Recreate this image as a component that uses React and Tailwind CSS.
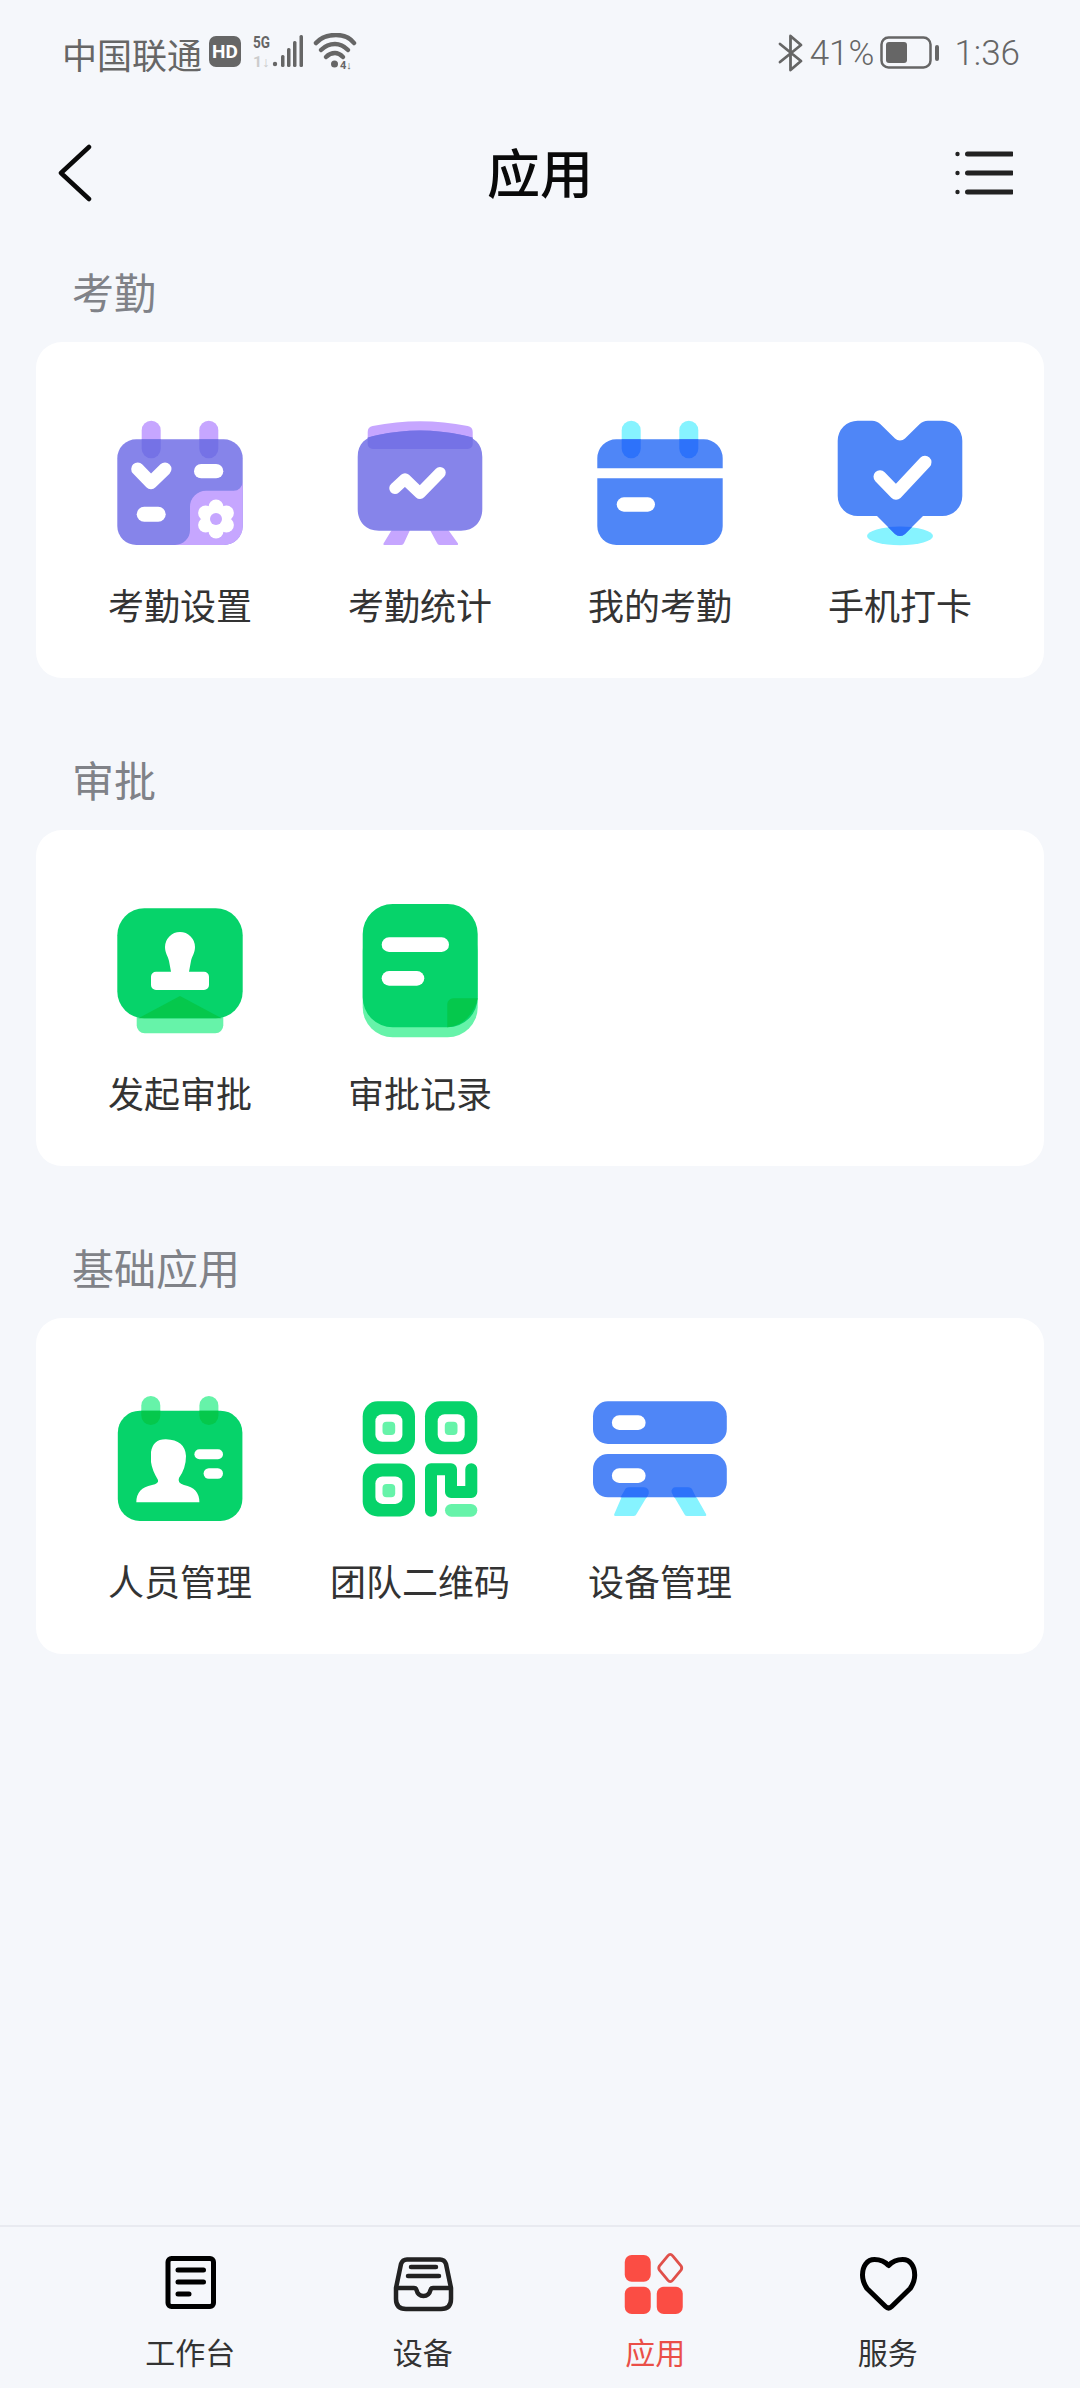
const P = { body: "#8684ea", light: "#c6a6ff", dark: "#7572e6" };
const B = { body: "#4f86f7", light: "#86f3ff", dark: "#2d72fa" };
const G = { body: "#06d36a", light: "#66f3a9", dark: "#05c84c" };

const Svg = ({ children }) => (
  <svg width="144" height="144" viewBox="0 0 144 144" fill="none">{children}</svg>
);

const Tabs = ({ c, top = 8.7, bottom = 46.3, x1 = 33.7, x2 = 91.3, w = 19 }) => (
  <>
    <rect x={x1} y={top} width={w} height={bottom - top} rx={w / 2} fill={c.light} />
    <rect x={x2} y={top} width={w} height={bottom - top} rx={w / 2} fill={c.light} />
  </>
);
const TabsOver = ({ c, bottom = 46.3, bodyTop = 27.3, x1 = 33.7, x2 = 91.3, w = 19 }) => (
  <>
    {[x1, x2].map((x) => (
      <path key={x} d={`M${x} ${bodyTop}H${x + w}V${bottom - w / 2}a${w / 2} ${w / 2} 0 0 1 -${w} 0Z`} fill={c.dark} />
    ))}
  </>
);

const IconSetting = () => (
  <Svg>
    <Tabs c={P} />
    <rect x="9.3" y="27.3" width="125.4" height="105.7" rx="19" fill={P.body} />
    <TabsOver c={P} />
    <path d="M134.7 70a9 9 0 0 1 -9 8.7H98a16 16 0 0 0 -16 16V118a15 15 0 0 1 -15 15H116a18.7 18.7 0 0 0 18.7 -18.7Z" fill={P.light} />
    <path d="M29.7 57L43 70.7L57 57" stroke="#fff" strokeWidth="13" strokeLinecap="round" strokeLinejoin="round" />
    <rect x="86" y="52" width="29.3" height="14.3" rx="7.15" fill="#fff" />
    <rect x="28.7" y="94.7" width="29" height="15" rx="7.5" fill="#fff" />
    <circle cx="108" cy="107" r="12.5" fill="#fff" />
    {[30, 90, 150, 210, 270, 330].map((a) => (
      <circle key={a} cx={108 + 12 * Math.cos((a * Math.PI) / 180)} cy={107 + 12 * Math.sin((a * Math.PI) / 180)} r="7.5" fill="#fff" />
    ))}
    <circle cx="108" cy="107" r="6" fill={P.light} />
  </Svg>
);

const IconStats = () => (
  <Svg>
    <path d="M19.7 20a6 6 0 0 1 5 -6Q72 4.5 119.7 14a6 6 0 0 1 5 6V32a5 5 0 0 1 -5 5H24.7a5 5 0 0 1 -5 -5Z" fill={P.light} />
    <path d="M43.7 118L62 118L56 131a3 3 0 0 1 -3 2H36.3Q35 133 35.5 131.5Z M82 118L100.3 118L110 131.5Q110.5 133 109 133H92a3 3 0 0 1 -3 -2Z" fill={P.light} />
    <path d="M9.7 45C9.7 31 18 25 30 23Q72 14 114 23C126 25 134.3 31 134.3 45V97C134.3 110 126 118.7 113 118.7H31C18 118.7 9.7 110 9.7 97Z" fill={P.body} />
    <path d="M19.7 25.5Q24 24 30 23Q72 14 114 23Q120 24 124.7 25.5V32a5 5 0 0 1 -5 5H24.7a5 5 0 0 1 -5 -5Z" fill={P.dark} />
    <path d="M47 76.3L57 67L72 81.3L92 60.7" stroke="#fff" strokeWidth="11.5" strokeLinecap="round" strokeLinejoin="round" />
  </Svg>
);

const IconMine = () => (
  <Svg>
    <Tabs c={B} />
    <path d="M9.3 56.3V46.3a19 19 0 0 1 19 -19H115.7a19 19 0 0 1 19 19V56.3Z" fill={B.body} />
    <path d="M9.3 66.3H134.7V114a19 19 0 0 1 -19 19H28.3a19 19 0 0 1 -19 -19Z" fill={B.body} />
    <TabsOver c={B} />
    <rect x="28.7" y="85.3" width="38.3" height="14.4" rx="7.2" fill="#fff" />
  </Svg>
);

const IconClock = () => (
  <Svg>
    <ellipse cx="72" cy="124" rx="33" ry="9.3" fill={B.light} />
    <path d="M9.7 28.7a20 20 0 0 1 20 -20H44a12 12 0 0 1 8.5 3.5L67 26.5a7 7 0 0 0 10 0L91.5 12.2A12 12 0 0 1 100 8.7H114.3a20 20 0 0 1 20 20V84a20 20 0 0 1 -20 20H95L77 122a7 7 0 0 1 -10 0L49 104H29.7a20 20 0 0 1 -20 -20Z" fill={B.body} />
    <path d="M60 115Q72 114 84 115L77 122a7 7 0 0 1 -10 0Z" fill={B.dark} />
    <path d="M52 64.7L68 81.3L97 50.3" stroke="#fff" strokeWidth="13" strokeLinecap="round" strokeLinejoin="round" />
  </Svg>
);

const IconStart = () => (
  <Svg>
    <rect x="28.7" y="100" width="86.6" height="32.3" rx="8" fill={G.light} />
    <rect x="9.3" y="7.3" width="125.4" height="110" rx="27" fill={G.body} />
    <path d="M30.3 117.3L72 95L113.7 117.3Q111 117.3 107.7 117.3H36.3Z" fill={G.dark} />
    <path d="M72 31a15 15 0 0 1 15 15c0 6 -3 9 -4 14l-2 10.7H96a5 5 0 0 1 5 5V84a5 5 0 0 1 -5 5H48a5 5 0 0 1 -5 -5V75.7a5 5 0 0 1 5 -5H63L61 60C60 55 57 52 57 46a15 15 0 0 1 15 -15Z" fill="#fff" />
  </Svg>
);

const IconRecord = () => (
  <Svg>
    <rect x="14.7" y="20" width="115" height="116.3" rx="30" fill={G.light} />
    <path d="M44.7 3H99.7a30 30 0 0 1 30 30V96.3a30 30 0 0 1 -30 30H44.7a30 30 0 0 1 -30 -30V33a30 30 0 0 1 30 -30Z" fill={G.body} />
    <path d="M99.3 103a6 6 0 0 1 6 -5.7H129.7C126 113 115 125 99.3 126.3Z" fill={G.dark} />
    <rect x="33.7" y="36.3" width="67.3" height="14.7" rx="7.35" fill="#fff" />
    <rect x="33.7" y="70" width="42.6" height="14.7" rx="7.35" fill="#fff" />
  </Svg>
);

const IconPeople = () => (
  <Svg>
    <Tabs c={G} top={6} bottom={35} x1={33.3} x2={91.4} />
    <rect x="9.8" y="20.7" width="124.6" height="110.3" rx="22" fill={G.body} />
    <TabsOver c={G} bottom={35} bodyTop={20.7} x1={33.3} x2={91.4} />
    <path d="M28.3 112.3Q28.3 98 44 95Q51 93.5 50 90Q44 80 43 72V62Q45 49 58 49.3Q77 50 78 66Q78 78 71 88Q69 93 76 95Q91.4 98 91.4 112.3Z" fill="#fff" />
    <rect x="86.4" y="59.3" width="28.6" height="10" rx="5" fill="#fff" />
    <rect x="95.6" y="78.3" width="19.4" height="10.4" rx="5.2" fill="#fff" />
  </Svg>
);

const QrSquare = ({ x, y }) => (
  <>
    <rect x={x} y={y} width="52.3" height="53" rx="15" fill={G.body} />
    <rect x={x + 12.7} y={y + 13} width="27" height="27.4" rx="7" fill="#fff" />
    <rect x={x + 19.8} y={y + 20.4} width="12.7" height="13.3" rx="4" fill={G.light} />
  </>
);

const IconQr = () => (
  <Svg>
    <QrSquare x={14.7} y={11.3} />
    <QrSquare x={77} y={11.3} />
    <QrSquare x={14.7} y={73.5} />
    <path d="M83 120.7V79.3H103V102H123.3V79.3" stroke={G.body} strokeWidth="12" strokeLinecap="round" strokeLinejoin="round" />
    <rect x="97" y="114" width="32.3" height="12.7" rx="6.35" fill={G.light} />
  </Svg>
);

const IconDevice = () => (
  <Svg>
    <path d="M41 97.3H56a5 5 0 0 1 4.7 6.5L48.5 124a3 3 0 0 1 -3 2H28Q25.5 126 26.3 124L36.5 100.5A5 5 0 0 1 41 97.3Z" fill={B.light} />
    <path d="M88 97.3H100a5 5 0 0 1 4.7 3.2L118 124Q119 126 116.5 126H99a3 3 0 0 1 -2.7 -2L83.7 102.5A4 4 0 0 1 88 97.3Z" fill={B.light} />
    <rect x="5" y="11.3" width="133.8" height="42.7" rx="15" fill={B.body} />
    <rect x="5" y="64" width="133.8" height="43.3" rx="15" fill={B.body} />
    <path d="M41 97.3H56a5 5 0 0 1 4.7 6.5L59 107.3H32.5L36.5 100.5A5 5 0 0 1 41 97.3Z" fill={B.dark} />
    <path d="M88 97.3H100a5 5 0 0 1 4.7 3.2L108 107.3H86L83.7 102.5A4 4 0 0 1 88 97.3Z" fill={B.dark} />
    <rect x="23.9" y="25.3" width="33.7" height="14.7" rx="7.35" fill="#fff" />
    <rect x="23.9" y="78.3" width="33.7" height="14.7" rx="7.35" fill="#fff" />
  </Svg>
);

const sections = [
  { title: "考勤", items: [["考勤设置", IconSetting], ["考勤统计", IconStats], ["我的考勤", IconMine], ["手机打卡", IconClock]], mt: "mt-[24px]", iconPad: "pt-0" },
  { title: "审批", items: [["发起审批", IconStart], ["审批记录", IconRecord]], mt: "mt-[74px]", iconPad: "pt-px" },
  { title: "基础应用", items: [["人员管理", IconPeople], ["团队二维码", IconQr], ["设备管理", IconDevice]], mt: "mt-[74px]", iconPad: "pt-0.5" },
];

const StatusBar = () => (
  <div className="h-[106px] flex items-center justify-between pl-[62px] pr-[60px] text-[#666]">
    <div className="flex items-center">
      <span className="text-[35px] leading-none">中国联通</span>
      <svg className="ml-[7px]" width="150" height="40" viewBox="0 0 150 40" fill="none">
        <rect x="0" y="3" width="32" height="31" rx="7" fill="#666" />
        <text x="16" y="25" textAnchor="middle" fontSize="19" fontWeight="700" fill="#fff" fontFamily="Roboto, sans-serif">HD</text>
        <text x="44" y="15" fontSize="16" fontWeight="700" fill="#666" fontFamily="Roboto, sans-serif" textLength="17" lengthAdjust="spacingAndGlyphs">5G</text>
        <text x="44" y="34" fontSize="14" fontWeight="700" fill="#ccc" fontFamily="Roboto, sans-serif" textLength="17" lengthAdjust="spacingAndGlyphs">1↓</text>
        <circle cx="66" cy="31" r="2.2" fill="#666" />
        <rect x="72" y="22" width="3.5" height="12" rx="1.5" fill="#666" />
        <rect x="78" y="15" width="3.5" height="19" rx="1.5" fill="#666" />
        <rect x="84" y="8" width="3.5" height="26" rx="1.5" fill="#666" />
        <rect x="90.5" y="2" width="3.5" height="32" rx="1.5" fill="#666" />
        <path d="M107 10Q114 2 127 2Q139 2 145 10" stroke="#666" strokeWidth="4.5" strokeLinecap="round" />
        <path d="M112 17Q118 11 126 11Q133 11 139 17" stroke="#666" strokeWidth="4.5" strokeLinecap="round" />
        <path d="M117 24Q121 20 126 20Q130 20 134 24" stroke="#666" strokeWidth="4.5" strokeLinecap="round" />
        <circle cx="125.5" cy="31" r="3.5" fill="#666" />
        <text x="131" y="36" fontSize="11" fontWeight="700" fill="#666" fontFamily="Roboto, sans-serif">4↓</text>
      </svg>
    </div>
    <div className="flex items-center">
      <svg width="26" height="38" viewBox="0 0 26 38" fill="none">
        <path d="M2 10L23 27L12.5 36V2L23 11L2 28" stroke="#666" strokeWidth="2.8" strokeLinejoin="round" strokeLinecap="round" />
      </svg>
      <span className="ml-[6px] text-[35px] leading-none font-light" style={{ fontFamily: "Roboto, sans-serif" }}>41%</span>
      <svg className="ml-[6px]" width="60" height="34" viewBox="0 0 60 34" fill="none">
        <rect x="1.5" y="1.5" width="49" height="30" rx="7" stroke="#666" strokeWidth="2.5" />
        <rect x="6" y="6" width="21" height="21" rx="3" fill="#666" />
        <rect x="55" y="9" width="4" height="16" rx="2" fill="#666" />
      </svg>
      <span className="ml-[14px] text-[35px] leading-none font-light" style={{ fontFamily: "Roboto, sans-serif" }}>1:36</span>
    </div>
  </div>
);

const NavBar = () => (
  <div className="h-[134px] flex items-center px-[58px]">
    <div className="flex-1">
      <svg width="36" height="58" viewBox="0 0 36 58" fill="none">
        <path d="M31 3L3 29L31 55" stroke="#0a0a0a" strokeWidth="4.5" strokeLinecap="round" strokeLinejoin="round" />
      </svg>
    </div>
    <span className="text-[53px] leading-none font-medium text-[#0a0a0a] -mt-[3px]">应用</span>
    <div className="flex-1 flex justify-end">
      <svg className="mr-[9px]" width="58" height="50" viewBox="0 0 58 50" fill="none">
        {[6, 25, 44].map((y) => (
          <g key={y}>
            <circle cx="2.5" cy={y} r="2.2" fill="#222" />
            <line x1="12.5" y1={y} x2="57" y2={y} stroke="#222" strokeWidth="5" strokeLinecap="round" />
          </g>
        ))}
      </svg>
    </div>
  </div>
);

const tabs = [
  ["工作台", false, (
    <svg width="72" height="64" viewBox="0 0 72 64" fill="none">
      <rect x="14" y="6.5" width="45.5" height="48" rx="3.5" stroke="#000" strokeWidth="5" />
      <path d="M24 18H49.5M24 30H49.5M24 42H35" stroke="#000" strokeWidth="5" strokeLinecap="round" />
    </svg>
  )],
  ["设备", false, (
    <svg width="72" height="64" viewBox="0 0 72 64" fill="none">
      <path d="M9 36L14 12Q15.5 7.5 20 7.5H53Q57.5 7.5 59 12L64 36V47Q64 57 54 57H19Q9 57 9 47Z" stroke="#222" strokeWidth="4.5" strokeLinejoin="round" />
      <path d="M9 36H27Q29 36 29.5 38Q31 44 36.5 44Q42 44 43.5 38Q44 36 46 36H64" stroke="#222" strokeWidth="4.5" strokeLinejoin="round" />
      <path d="M24 15H49M21 24H52" stroke="#222" strokeWidth="4.5" strokeLinecap="round" />
    </svg>
  )],
  ["应用", true, (
    <svg width="72" height="64" viewBox="0 0 72 64" fill="none">
      <rect x="5.75" y="3" width="26" height="26.7" rx="7" fill="#fb4d44" />
      <rect x="5.75" y="34.7" width="26" height="27.3" rx="7" fill="#fb4d44" />
      <rect x="37.75" y="34.7" width="26" height="27.3" rx="7" fill="#fb4d44" />
      <path d="M48.8 3.8Q51.25 1 53.7 3.8L62 13.8Q63.5 16 62 18.2L53.7 28.2Q51.25 31 48.8 28.2L40.5 18.2Q39 16 40.5 13.8Z" stroke="#e0504a" strokeWidth="2.8" strokeLinejoin="round" />
    </svg>
  )],
  ["服务", false, (
    <svg width="72" height="64" viewBox="0 0 72 64" fill="none">
      <path d="M36.6 13.5C32 8.5 27 7.5 22.5 7.5C15 7.5 10.5 14 10.5 23C10.5 29 12 32 15 36.5L33.5 54.5Q36.6 57.5 39.7 54.5L58.2 36.5C61.2 32 62.7 29 62.7 23C62.7 14 58.2 7.5 50.7 7.5C46.2 7.5 41.2 8.5 36.6 13.5Z" stroke="#000" strokeWidth="5" strokeLinejoin="round" />
    </svg>
  )],
];

export default function App() {
  return (
    <div
      className="w-[1080px] h-[2388px] flex flex-col bg-[#f5f7fb] overflow-hidden"
      style={{ fontFamily: '"Noto Sans CJK SC", "Noto Sans", sans-serif' }}
    >
      <StatusBar />
      <NavBar />
      <div className="px-[36px]">
        {sections.map((s) => (
          <section key={s.title} className={s.mt}>
            <h2 className="pl-[36px] h-[54px] flex items-center text-[42px] leading-none font-normal text-[#808288]">{s.title}</h2>
            <div className="mt-[24px] h-[336px] rounded-[26px] bg-white px-[24px] pt-[70px] grid grid-cols-4 content-start">
              {s.items.map(([label, Icon]) => (
                <div key={label} className="flex flex-col items-center">
                  <div className={`h-[146px] ${s.iconPad}`}>
                    <Icon />
                  </div>
                  <span className="mt-[21px] h-[50px] flex items-center text-[36px] leading-none text-[#333] whitespace-nowrap">{label}</span>
                </div>
              ))}
            </div>
          </section>
        ))}
      </div>
      <div className="mt-auto h-[163px] border-t-2 border-[#e8eaf0] pl-[74px] pt-[25px] flex">
        {tabs.map(([label, active, icon]) => (
          <div key={label} className="w-[232.5px] flex flex-col items-center">
            {icon}
            <span className={`mt-[15px] h-[40px] flex items-center text-[30px] leading-none ${active ? "text-[#ea4f48]" : "text-[#333]"}`}>{label}</span>
          </div>
        ))}
      </div>
    </div>
  );
}
